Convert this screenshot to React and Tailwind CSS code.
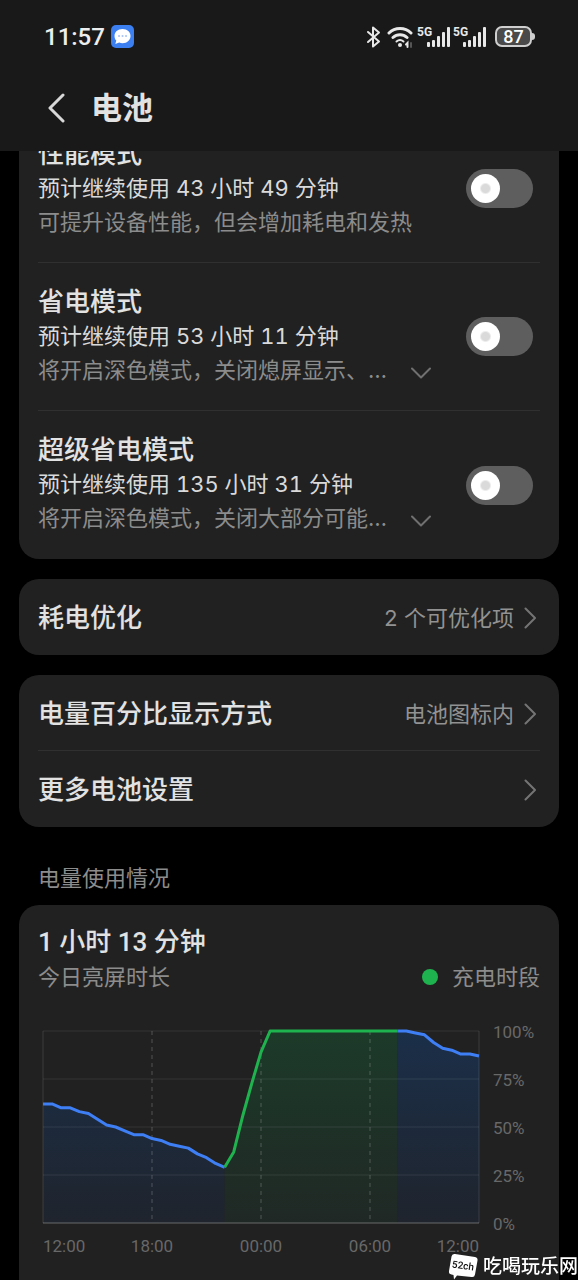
import { useState } from "react";

const modes = [
  {
    id: "performance",
    title: "性能模式",
    estimate: "预计继续使用 43 小时 49 分钟",
    desc: "可提升设备性能，但会增加耗电和发热",
    expandable: false,
  },
  {
    id: "saver",
    title: "省电模式",
    estimate: "预计继续使用 53 小时 11 分钟",
    desc: "将开启深色模式，关闭熄屏显示、…",
    expandable: true,
  },
  {
    id: "ultra",
    title: "超级省电模式",
    estimate: "预计继续使用 135 小时 31 分钟",
    desc: "将开启深色模式，关闭大部分可能…",
    expandable: true,
  },
];

// Battery level, one value every half hour
const segments = [
  {
    start: 0,
    stroke: "#3f7ff5",
    fill: "url(#fillBlue)",
    levels: [
      62, 62, 60, 60, 58, 57, 54, 51, 50, 48, 46, 46, 44, 43, 41, 40, 39, 36,
      34, 31, 29,
    ],
  },
  {
    start: 20,
    stroke: "#1fb34f",
    fill: "url(#fillGreen)",
    levels: [
      29, 37, 56, 73, 89, 100, 100, 100, 100, 100, 100, 100, 100, 100, 100,
      100, 100, 100, 100, 100,
    ],
  },
  {
    start: 39,
    stroke: "#3f7ff5",
    fill: "url(#fillBlue)",
    levels: [100, 100, 99, 98, 94, 91, 90, 88, 88, 87],
  },
];

const CHART_W = 480;
const CHART_H = 200;

function BatteryChart() {
  const toPoint = (start) => (level, i) =>
    `${(start + i) * 10},${CHART_H - level * 2}`;

  return (
    <svg
      viewBox={`0 0 ${CHART_W} ${CHART_H}`}
      preserveAspectRatio="none"
      className="block h-48 w-full overflow-visible"
      role="img"
      aria-label="电量使用情况"
    >
      <defs>
        <linearGradient id="fillBlue" gradientUnits="userSpaceOnUse" x1="0" y1="0" x2="0" y2="200">
          <stop offset="0" stopColor="#1b2f49" />
          <stop offset="1" stopColor="#1f242d" />
        </linearGradient>
        <linearGradient id="fillGreen" gradientUnits="userSpaceOnUse" x1="0" y1="0" x2="0" y2="200">
          <stop offset="0" stopColor="#1c3a29" />
          <stop offset="1" stopColor="#202825" />
        </linearGradient>
      </defs>
      {segments.map((s) => (
        <polygon
          key={s.start}
          fill={s.fill}
          points={[
            `${s.start * 10},${CHART_H}`,
            ...s.levels.map(toPoint(s.start)),
            `${(s.start + s.levels.length - 1) * 10},${CHART_H}`,
          ].join(" ")}
        />
      ))}
      {[0, 50, 100, 150, 200].map((y) => (
        <line key={y} x1="0" x2={CHART_W} y1={y} y2={y} stroke="#fff" strokeOpacity={y === 200 ? 0.16 : 0.09} strokeWidth={y === 200 ? 2 : 1} vectorEffect="non-scaling-stroke" />
      ))}
      {[0, 480].map((x) => (
        <line key={x} x1={x} x2={x} y1="0" y2={CHART_H} stroke="#fff" strokeOpacity="0.12" vectorEffect="non-scaling-stroke" />
      ))}
      {[120, 240, 360].map((x) => (
        <line key={x} x1={x} x2={x} y1="0" y2={CHART_H} stroke="#fff" strokeOpacity="0.22" strokeDasharray="4 4" vectorEffect="non-scaling-stroke" />
      ))}
      {segments.map((s) => (
        <polyline
          key={s.start}
          fill="none"
          stroke={s.stroke}
          strokeWidth="3"
          strokeLinejoin="round"
          vectorEffect="non-scaling-stroke"
          points={s.levels.map(toPoint(s.start)).join(" ")}
        />
      ))}
    </svg>
  );
}

function Signal() {
  return (
    <svg width="34" height="22" viewBox="0 0 34 22" fill="#e8e8e8" className="overflow-visible" aria-hidden="true">
      <text x="-2" y="10" fontSize="12" fontWeight="700" fontFamily="Roboto, sans-serif">
        5G
      </text>
      <rect x="8" y="16" width="3" height="5" rx="1" />
      <rect x="13" y="14" width="3" height="7" rx="1" />
      <rect x="18" y="10" width="3" height="11" rx="1" />
      <rect x="23" y="6" width="3" height="15" rx="1" />
      <rect x="28" y="1" width="3" height="20" rx="1" />
    </svg>
  );
}

function StatusBar() {
  return (
    <div className="flex h-[73px] items-center justify-between pr-[43px] pl-11">
      <div className="flex items-center gap-[6px]">
        <span className="font-['Roboto',sans-serif] text-[24px] leading-7 font-medium text-[#ededed]">11:57</span>
        <svg width="23" height="23" viewBox="0 0 23 23" aria-hidden="true">
          <rect width="23" height="23" rx="5" fill="#3b7ff0" />
          <path d="M11.5 4c4.8 0 8 3 8 7s-3.2 7.200-8 7.200c-1.200 0-2.300-.2-3.300-.6L4.300 19l1-3.400C4 14.400 3.500 12.800 3.500 11c0-4 3.200-7 8-7z" fill="#fff" />
          <path d="M8 11h.1M11.500 11h.1M15 11h.1" stroke="#a9c6f8" strokeWidth="2" strokeLinecap="round" />
        </svg>
      </div>
      <div className="flex items-center gap-[6px]">
        <svg width="15" height="22" viewBox="0 0 15 22" fill="none" stroke="#e8e8e8" strokeWidth="2" strokeLinejoin="round" strokeLinecap="round" aria-hidden="true">
          <path d="M2 6l11 9.500-6 5V1.500l6 5L2 16" />
        </svg>
        <svg width="26" height="22" viewBox="0 0 26 22" fill="none" stroke="#e8e8e8" strokeWidth="3" strokeLinecap="round" aria-hidden="true">
          <path d="M2 7C8 1 18 1 24 7M6 11.500c4-3.700 10-3.700 14 0" />
          <path d="M9.500 15.500c2-1.700 5-1.700 7 0" strokeWidth="2" />
          <circle cx="13" cy="19" r="2" fill="#e8e8e8" stroke="none" />
          <path d="M19 18.500l1.500-1.500v4" strokeWidth="2" />
          <path d="M24 17v4" stroke="#555" strokeWidth="2" />
        </svg>
        <Signal />
        <div className="-ml-1 flex">
          <Signal />
        </div>
        <div className="flex items-center">
          <span className="flex h-[21px] w-[37px] items-center justify-center rounded-[7px] border-2 border-[#cfcfcf] bg-[#4a4a4a] font-['Roboto',sans-serif] text-[18px] leading-none font-medium text-white">
            87
          </span>
          <span className="h-[7px] w-[3px] rounded-r-sm bg-[#cfcfcf]" />
        </div>
      </div>
    </div>
  );
}

function ChevronRight() {
  return (
    <svg width="12" height="22" viewBox="0 0 12 22" fill="none" stroke="#747474" strokeWidth="2" strokeLinecap="round" strokeLinejoin="round" className="mr-1 shrink-0" aria-hidden="true">
      <path d="M1.500 1.500L11 11l-9.500 9.500" />
    </svg>
  );
}

function LinkRow({ title, value }) {
  return (
    <button type="button" className="flex h-[76px] w-full items-center justify-between pt-[2px] text-left">
      <span className="text-[26px] leading-9 font-medium text-[#e2e2e2]">{title}</span>
      <span className="flex items-center gap-[10px] text-[22px] leading-8 text-[#929292]">
        {value}
        <ChevronRight />
      </span>
    </button>
  );
}

function ModeRow({ mode, checked, onChange }) {
  return (
    <li className="flex h-[148px] items-center justify-between pr-[7px]">
      <div className="min-w-0 pb-[2px]">
        <label htmlFor={mode.id} className="block text-[26px] leading-[34px] font-medium text-[#e2e2e2]">
          {mode.title}
        </label>
        <p className="text-[22px] leading-[34px] text-[#dadada]">{mode.estimate}</p>
        <div className="flex items-center">
          <p className="text-[22px] leading-[34px] text-[#8c8c8c]">{mode.desc}</p>
          {mode.expandable && (
            <button type="button" aria-label="展开" className="ml-6 pt-[6px]">
              <svg width="20" height="12" viewBox="0 0 20 12" fill="none" stroke="#707070" strokeWidth="2" strokeLinecap="round" strokeLinejoin="round">
                <path d="M1 1.500l9 9 9-9" />
              </svg>
            </button>
          )}
        </div>
      </div>
      <input
        id={mode.id}
        type="checkbox"
        role="switch"
        checked={checked}
        onChange={onChange}
        className="flex h-[39px] w-[67px] shrink-0 appearance-none items-center rounded-full bg-[#5e5e5e] px-[5px] before:size-[29px] before:rounded-full before:bg-[radial-gradient(circle,#dadada_4px,#fff_6px)] before:content-[''] checked:justify-end checked:bg-[#1fb34f]"
      />
    </li>
  );
}

export default function App() {
  const [enabled, setEnabled] = useState({});

  const toggle = (id) => setEnabled((prev) => ({ ...prev, [id]: !prev[id] }));

  return (
    <div className="flex min-h-screen flex-col bg-black font-['Inter','Noto_Sans_CJK_SC',sans-serif] tabular-nums">
      {/* Header */}
      <header className="sticky top-0 z-10 bg-[#191919] pb-2">
        <StatusBar />
        <div className="flex h-[70px] items-center gap-[26px] pl-12">
          <button type="button" aria-label="返回">
            <svg width="17" height="30" viewBox="0 0 17 30" fill="none" stroke="#d8d8d8" strokeWidth="3" strokeLinecap="round" strokeLinejoin="round">
              <path d="M15 2L2 15l13 13" />
            </svg>
          </button>
          <h1 className="text-[31px] leading-10 font-bold text-[#e2e2e2]">电池</h1>
        </div>
      </header>

      <main className="-mt-9 flex flex-1 flex-col px-[19px]">
        {/* Power modes */}
        <ul className="mb-5 divide-y divide-[#303030] rounded-[20px] bg-[#212121] px-[19px]">
          {modes.map((m) => (
            <ModeRow key={m.id} mode={m} checked={!!enabled[m.id]} onChange={() => toggle(m.id)} />
          ))}
        </ul>

        <div className="mb-5 rounded-[20px] bg-[#212121] px-[19px]">
          <LinkRow title="耗电优化" value="2 个可优化项" />
        </div>

        <div className="divide-y divide-[#303030] rounded-[20px] bg-[#212121] px-[19px]">
          <LinkRow title="电量百分比显示方式" value="电池图标内" />
          <LinkRow title="更多电池设置" />
        </div>

        {/* Usage */}
        <h2 className="px-[19px] pt-[35px] pb-[11px] text-[22px] leading-8 text-[#8c8c8c]">
          电量使用情况
        </h2>
        <section className="flex-1 rounded-t-[20px] bg-[#212121] px-[19px] pt-5">
          <p className="font-['Roboto','Noto_Sans_CJK_SC',sans-serif] text-[26px] leading-[34px] font-medium text-[#e2e2e2]">
            1 小时 13 分钟
          </p>
          <div className="flex items-center justify-between text-[22px] leading-9 text-[#8c8c8c]">
            <span>今日亮屏时长</span>
            <span className="flex items-center gap-[14px]">
              <span className="size-4 rounded-full bg-[#1fb34f]" />
              充电时段
            </span>
          </div>

          <div className="mt-[25px] flex pl-[5px] font-['Roboto',sans-serif] text-[17px] leading-5 text-[#686868]">
            <div className="min-w-0 flex-1 pt-[11px]">
              <BatteryChart />
              <div className="mt-[13px] grid grid-cols-8">
                <span>12:00</span>
                <span className="col-span-2 text-center">18:00</span>
                <span className="col-span-2 text-center">00:00</span>
                <span className="col-span-2 text-center">06:00</span>
                <span className="text-right">12:00</span>
              </div>
            </div>
            <div className="ml-[14px] flex h-[214px] w-[47px] flex-col justify-between pt-[2px]">
              <span>100%</span>
              <span>75%</span>
              <span>50%</span>
              <span>25%</span>
              <span>0%</span>
            </div>
          </div>
        </section>
      </main>

      {/* Site mark */}
      <div className="fixed right-0 bottom-0 z-20 flex items-center gap-1 text-[19px] leading-6 font-medium text-white">
        <svg width="31" height="27" viewBox="0 0 31 27" aria-hidden="true">
          <path d="M7 1l20 3q3 .5 2.500 3.500l-2.500 14q-.5 3-3.500 2.500L9 22.500 6 26.500l-.5-4.500-2-.5Q.5 21 1 18L3.500 3.500Q4 .5 7 1z" fill="#fff" />
          <text x="15" y="16" fontSize="10" fontWeight="500" textAnchor="middle" fontFamily="Roboto, sans-serif" fill="#111" transform="rotate(8 15 13)">
            52ch
          </text>
        </svg>
        <span>吃喝玩乐网</span>
      </div>
    </div>
  );
}
